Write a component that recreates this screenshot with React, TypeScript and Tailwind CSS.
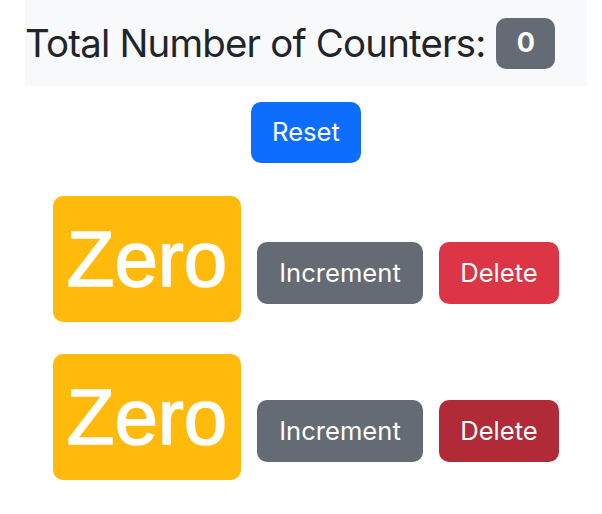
import { useState } from "react";

type Counter = { id: number; value: number };

export default function App() {
  const [counters] = useState<Counter[]>([
    { id: 1, value: 0 },
    { id: 2, value: 0 },
  ]);

  const total = counters.filter((c) => c.value > 0).length;

  return (
    <div className="ml-[25px] w-[562px] font-['Inter',sans-serif] text-[#212529]">
      {/* Navbar */}
      <nav className="flex h-[86px] items-center bg-[#f8f9fa]">
        <span className="text-[38.4px] leading-none tracking-[-0.8px]">Total Number of Counters:</span>
        <span className="ml-[11px] flex h-[51px] w-[59px] items-center justify-center rounded-[10px] bg-[#646b74] text-[27px] font-bold text-white">
          {total}
        </span>
      </nav>

      <main>
        <div className="flex justify-center pt-[16px]">
          <button className="h-[61px] w-[110px] rounded-[10px] bg-[#0d6efd] text-[25.6px] text-white">
            Reset
          </button>
        </div>

        <div className="mt-[33px] flex flex-col gap-[32px] pl-[28px]">
          {counters.map((c, i) => (
            <div key={c.id} className="flex items-start">
              <span className="flex h-[126px] w-[188px] items-center justify-center rounded-[10px] bg-[#ffba0b] font-['Liberation_Sans',Arial,sans-serif] text-[78px] leading-none text-white [-webkit-text-stroke:1.5px_white]">
                {c.value === 0 ? "Zero" : c.value}
              </span>
              <button className="ml-[16px] mt-[46px] h-[62px] w-[166px] rounded-[10px] bg-[#646b74] text-[25.6px] text-white">
                Increment
              </button>
              <button
                className={
                  i === 1
                    ? "ml-[16px] mt-[46px] h-[62px] w-[120px] rounded-[10px] bg-[#b02a37] text-[25.6px] text-white"
                    : "ml-[16px] mt-[46px] h-[62px] w-[120px] rounded-[10px] bg-[#dc3545] text-[25.6px] text-white"
                }
              >
                Delete
              </button>
            </div>
          ))}
        </div>
      </main>
    </div>
  );
}
